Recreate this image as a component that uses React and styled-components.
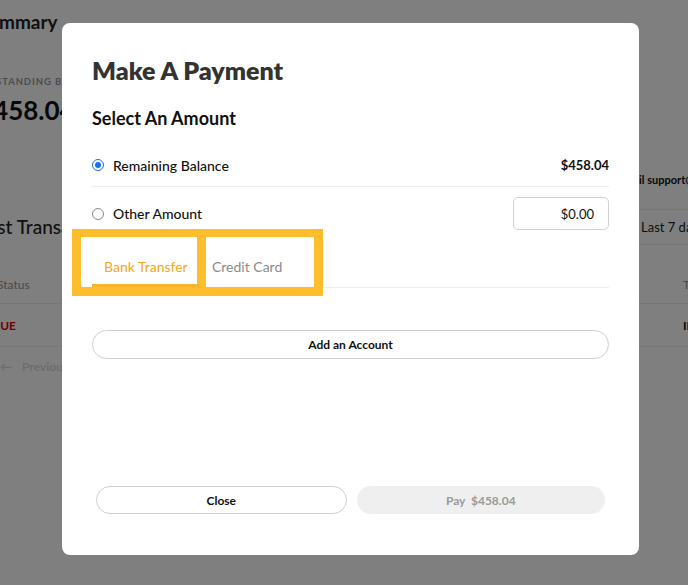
import React, { useState } from "react";
import styled, { createGlobalStyle } from "styled-components";

const GlobalStyle = createGlobalStyle`
  * { box-sizing: border-box; }
  html, body { margin: 0; padding: 0; }
  body {
    font-family: "Lato", "Open Sans", sans-serif;
    background: #ffffff;
    color: #111;
  }
`;

/* ---------- page behind the dialog ---------- */

const Screen = styled.div`
  position: relative;
  width: 688px;
  height: 585px;
  overflow: hidden;
  background: #fff;
`;

const Page = styled.div`
  width: 812px;
  margin-left: -22px;
  padding: 10px 22px 0 0;
  display: flex;
  flex-direction: column;
`;

const PageTitle = styled.h1`
  margin: 0;
  font-size: 19px;
  line-height: 24px;
  font-weight: 700;
  color: #222;
`;

const BalanceLabel = styled.div`
  margin-top: 42px;
  margin-left: -5px;
  font-size: 9.5px;
  line-height: 12px;
  font-weight: 700;
  letter-spacing: 0.9px;
  text-transform: uppercase;
  white-space: nowrap;
  color: #9a9a9a;
`;

const BalanceAmount = styled.div`
  margin-top: 6px;
  font-size: 26px;
  line-height: 32px;
  font-weight: 700;
  color: #111;
`;

const SupportRow = styled.div`
  margin-top: 47px;
  padding-left: 640px;
  font-size: 11px;
  line-height: 14px;
  font-weight: 700;
  white-space: nowrap;
  color: #111;
`;

const TransHeader = styled.div`
  margin-top: 22px;
  display: flex;
  align-items: center;
  justify-content: space-between;
`;

const SectionTitle = styled.h2`
  margin: 0;
  font-size: 19px;
  line-height: 24px;
  font-weight: 500;
  color: #222;
`;

const RangeSelect = styled.div`
  width: 140px;
  height: 36px;
  display: flex;
  align-items: center;
  padding-left: 12px;
  border: 1px solid #eee;
  border-radius: 4px;
  font-size: 13px;
  color: #222;
`;

const Table = styled.div`
  margin-top: 20px;
  display: flex;
  flex-direction: column;
`;

const TableRow = styled.div`
  display: grid;
  grid-template-columns: 686px 80px;
  align-items: center;
  height: ${(p) => (p.$head ? 39 : 43)}px;
  padding-left: 19px;
  border-bottom: 1px solid #eee;
  font-size: 12px;
`;

const Cell = styled.span`
  color: ${(p) => p.$color || "#111"};
  font-weight: ${(p) => (p.$bold ? 700 : 400)};
  margin-left: ${(p) => p.$shift || 0}px;
  white-space: nowrap;
`;

const Pager = styled.div`
  margin-top: 12px;
  padding-left: 22px;
  display: flex;
  align-items: center;
  gap: 10px;
  font-size: 12px;
  line-height: 16px;
  font-weight: 700;
  color: #dadada;
`;

/* ---------- dialog ---------- */

const Overlay = styled.div`
  position: absolute;
  inset: 0;
  background: rgba(0, 0, 0, 0.5);
  display: flex;
  align-items: flex-start;
  padding: 23px 0 0 62px;
`;

const Modal = styled.div`
  width: 577px;
  height: 532px;
  background: #fff;
  border-radius: 8px;
  padding: 32px 30px 41px;
  display: flex;
  flex-direction: column;
`;

const ModalTitle = styled.h2`
  margin: 0;
  font-size: 25px;
  line-height: 30px;
  font-weight: 800;
  color: #333;
`;

const SubTitle = styled.h3`
  margin: 21px 0 0;
  font-size: 18px;
  line-height: 24px;
  font-weight: 700;
  color: #111;
`;

const AmountRow = styled.label`
  display: flex;
  align-items: center;
  justify-content: space-between;
  height: 43px;
  margin-top: ${(p) => (p.$first ? 14 : 0)}px;
  padding-top: ${(p) => (p.$first ? 0 : 10)}px;
  border-bottom: ${(p) => (p.$first ? "1px solid #eee" : "none")};
  cursor: pointer;
`;

const Choice = styled.span`
  display: flex;
  align-items: center;
  gap: 9px;
  font-size: 14px;
  font-weight: 500;
  color: #111;
`;

const Radio = styled.span`
  position: relative;
  width: 12px;
  height: 12px;
  border-radius: 50%;
  border: 1px solid ${(p) => (p.$checked ? "#1a6ef5" : "#8a8a8a")};
  background: #fff;
  &::after {
    content: "";
    display: ${(p) => (p.$checked ? "block" : "none")};
    position: absolute;
    inset: 2px;
    border-radius: 50%;
    background: #1a6ef5;
  }
`;

const Price = styled.span`
  font-size: 13px;
  font-weight: 700;
  color: #111;
`;

const AmountInput = styled.input`
  width: 96px;
  height: 33px;
  border: 1px solid #d2d2d2;
  border-radius: 5px;
  padding: 0 14px;
  text-align: right;
  font-family: inherit;
  font-size: 13px;
  color: #111;
  outline: none;
`;

const TabBar = styled.div`
  margin-top: 7px;
  height: 51px;
  display: flex;
  border-bottom: 1px solid #eee;
`;

const Highlight = styled.div`
  position: relative;
  display: flex;
  gap: 9px;
  margin: -8px 0 -9px -20px;
  padding: 8px 9px 9px;
  background: #fdbd2c;
`;

const TabBox = styled.div`
  width: ${(p) => p.$width}px;
  height: 50px;
  padding-left: ${(p) => p.$pad}px;
  background: #fff;
  display: flex;
`;

const Tab = styled.button`
  height: 50px;
  padding: 12px 11px 0 ${(p) => (p.$active ? 12 : 0)}px;
  border: none;
  border-bottom: 3px solid ${(p) => (p.$active ? "#f7b52c" : "transparent")};
  background: transparent;
  font-family: inherit;
  font-size: 14px;
  color: ${(p) => (p.$active ? "#f5a623" : "#8a8a8a")};
  cursor: pointer;
  white-space: nowrap;
`;

const PillButton = styled.button`
  flex: 1;
  height: ${(p) => (p.$tall ? 29 : 28)}px;
  border-radius: 999px;
  border: ${(p) => (p.$muted ? "none" : "1.5px solid #cfcfcf")};
  background: ${(p) => (p.$muted ? "#efefef" : "#fff")};
  color: ${(p) => (p.$muted ? "#9a9a9a" : "#111")};
  font-family: inherit;
  font-size: 12px;
  font-weight: 700;
  cursor: ${(p) => (p.$muted ? "default" : "pointer")};
  word-spacing: ${(p) => (p.$muted ? "3px" : "0")};
`;

const AddRow = styled.div`
  margin-top: 42px;
  display: flex;
`;

const Footer = styled.div`
  margin-top: auto;
  display: flex;
  gap: 10px;
  padding: 0 4px;
`;

export default function App() {
  const [choice, setChoice] = useState("remaining");
  const [tab, setTab] = useState("bank");
  const [other, setOther] = useState("$0.00");

  return (
    <Screen>
      <GlobalStyle />
      <Page>
        <PageTitle>Summary</PageTitle>
        <BalanceLabel>Outstanding Balance</BalanceLabel>
        <BalanceAmount>$458.04</BalanceAmount>
        <SupportRow>Email support@ourcompany.com</SupportRow>
        <TransHeader>
          <SectionTitle>Last Transactions</SectionTitle>
          <RangeSelect>Last 7 days</RangeSelect>
        </TransHeader>
        <Table>
          <TableRow $head>
            <Cell $color="#949494">Status</Cell>
            <Cell $color="#949494">Total</Cell>
          </TableRow>
          <TableRow>
            <Cell $color="#e00000" $bold $shift={-6}>DUE</Cell>
            <Cell $bold>INV-0042</Cell>
          </TableRow>
        </Table>
        <Pager>
          <span>←</span>
          <span>Previous</span>
        </Pager>
      </Page>

      <Overlay>
        <Modal>
          <ModalTitle>Make A Payment</ModalTitle>
          <SubTitle>Select An Amount</SubTitle>

          <AmountRow $first onClick={() => setChoice("remaining")}>
            <Choice>
              <Radio $checked={choice === "remaining"} />
              Remaining Balance
            </Choice>
            <Price>$458.04</Price>
          </AmountRow>

          <AmountRow onClick={() => setChoice("other")}>
            <Choice>
              <Radio $checked={choice === "other"} />
              Other Amount
            </Choice>
            <AmountInput value={other} onChange={(e) => setOther(e.target.value)} />
          </AmountRow>

          <TabBar>
            <Highlight>
              <TabBox $width={116} $pad={11}>
                <Tab $active={tab === "bank"} onClick={() => setTab("bank")}>
                  Bank Transfer
                </Tab>
              </TabBox>
              <TabBox $width={108} $pad={6}>
                <Tab $active={tab === "card"} onClick={() => setTab("card")}>
                  Credit Card
                </Tab>
              </TabBox>
            </Highlight>
          </TabBar>

          <AddRow>
            <PillButton $tall>Add an Account</PillButton>
          </AddRow>

          <Footer>
            <PillButton>Close</PillButton>
            <PillButton $muted>Pay $458.04</PillButton>
          </Footer>
        </Modal>
      </Overlay>
    </Screen>
  );
}
